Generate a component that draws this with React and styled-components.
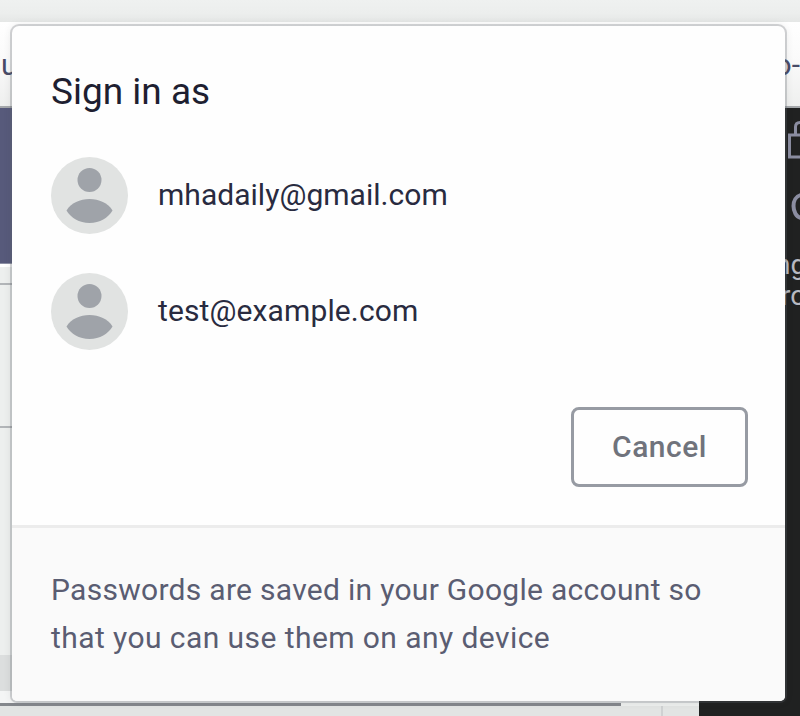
import React from "react";
import styled, { createGlobalStyle } from "styled-components";

const GlobalStyle = createGlobalStyle`
  *, *::before, *::after { box-sizing: border-box; }
  body { margin: 0; }
`;

const Screen = styled.div`
  position: relative;
  width: 800px;
  height: 716px;
  overflow: hidden;
  background: #eceeed;
  font-family: Roboto, "Liberation Sans", sans-serif;
`;

const Backdrop = styled.div`
  height: 100%;
  display: flex;
  flex-direction: column;
`;

const TabStrip = styled.div`
  height: 22px;
  flex: none;
  background: linear-gradient(#eff1f0, #eceeed 60%, #e5e7e6);
`;

const AddressBar = styled.div`
  height: 86px;
  flex: none;
  display: flex;
  justify-content: space-between;
  padding: 25px 0 0 1px;
  background: linear-gradient(#ffffff, #fbfbfb 40%, #eeefee);
  border-bottom: 2px solid #a5a8ab;
  color: #484b68;
  font-size: 30px;
  line-height: 36px;
  white-space: nowrap;
`;

const Panes = styled.div`
  flex: 1;
  display: flex;
  min-height: 0;
`;

const Page = styled.div`
  width: 699px;
  display: flex;
  flex-direction: column;
  background: #edefee;
`;

const Banner = styled.div`
  height: 156px;
  flex: none;
  background: #575a7b;
  border-bottom: 1px solid #8d90a5;
`;

const Block = styled.div`
  height: ${(p) => p.$height}px;
  flex: none;
  background: ${(p) => p.$fill || "#edefee"};
  border-bottom: ${(p) => (p.$ruled ? "2px solid #b2b5b8" : "0")};
`;

const BottomRule = styled.div`
  height: 3px;
  flex: none;
  width: 621px;
  background: #84878c;
`;

const BottomStrip = styled.div`
  flex: 1;
  display: flex;
  justify-content: flex-end;
  background: #e2e4e3;
`;

const BottomCell = styled.div`
  width: 38px;
  border-left: 2px solid #cfd1d2;
`;

const DevTools = styled.div`
  flex: 1;
  display: flex;
  flex-direction: column;
  align-items: flex-end;
  background: #202121;
  color: #b7b9c2;
  font-size: 28px;
  line-height: 31px;
`;

const DevIcons = styled.svg`
  display: block;
  width: 16px;
  height: 141px;
  flex: none;
`;

const DevLine = styled.div`
  width: ${(p) => p.$width}px;
  height: 31px;
  white-space: nowrap;
`;

const Dialog = styled.section`
  position: absolute;
  left: 12px;
  top: 26px;
  width: 773px;
  height: 675px;
  display: flex;
  flex-direction: column;
  overflow: hidden;
  background: #fefefe;
  border-radius: 7px 7px 5px 5px;
  box-shadow: 0 0 0 2px rgba(95, 100, 110, 0.26), 0 0 8px rgba(60, 64, 67, 0.14);
`;

const Body = styled.div`
  height: 499px;
  flex: none;
  display: flex;
  flex-direction: column;
  padding: 43px 37px 0 39px;
`;

const Title = styled.h1`
  margin: 0;
  height: 88px;
  color: #1e1f31;
  font-size: 37px;
  font-weight: 400;
  line-height: 46px;
`;

const Accounts = styled.ul`
  list-style: none;
  margin: 0;
  padding: 0;
  display: grid;
  gap: 39px;
`;

const Account = styled.li`
  display: flex;
  align-items: center;
  gap: 30px;
  height: 77px;
`;

const AvatarIcon = styled.svg`
  width: 77px;
  height: 77px;
  flex: none;
`;

const Email = styled.span`
  padding-bottom: 2px;
  color: #292b40;
  font-size: 30px;
  line-height: 36px;
  letter-spacing: ${(p) => p.$tracking}px;
`;

const CancelButton = styled.button`
  align-self: flex-end;
  width: 177px;
  height: 80px;
  margin-top: 57px;
  padding: 0 0 2px;
  background: #fefefe;
  border: 3px solid #979ba3;
  border-radius: 8px;
  color: #70737c;
  font-family: inherit;
  font-size: 30px;
  font-weight: 500;
  letter-spacing: 0.5px;
`;

const Footer = styled.footer`
  flex: 1;
  padding: 38px 30px 0 39px;
  background: #fafafa;
  border-top: 3px solid #ececec;
  color: #5a5d72;
  font-size: 30px;
  line-height: 48px;
`;

const FooterLine = styled.div`
  white-space: nowrap;
  letter-spacing: ${(p) => p.$tracking}px;
`;

function Avatar() {
  return (
    <AvatarIcon viewBox="0 0 77 77" aria-hidden="true">
      <circle cx="38.5" cy="38.5" r="38.5" fill="#e1e3e2" />
      <circle cx="38.5" cy="23" r="12" fill="#9fa3a9" />
      <path
        d="M15.5 53.5C20 46 29 42 38.500 42S57 46 61.500 53.500C57 61 49 66 38.500 66S20 61 15.500 53.500Z"
        fill="#9fa3a9"
      />
    </AvatarIcon>
  );
}

const accounts = [
  { email: "mhadaily@gmail.com", tracking: 0.03 },
  { email: "test@example.com", tracking: 0.12 },
];

export default function App() {
  return (
    <Screen>
      <GlobalStyle />
      <Backdrop>
        <TabStrip />
        <AddressBar>
          <span>u</span>
          <span>o-</span>
        </AddressBar>
        <Panes>
          <Page>
            <Banner />
            <Block $height={3} $fill="#ffffff" />
            <Block $height={18} $ruled />
            <Block $height={143} $ruled />
            <Block $height={227} />
            <Block $height={36} $fill="#dcdede" />
            <Block $height={12} $fill="#f4f5f5" />
            <BottomRule />
            <BottomStrip>
              <BottomCell />
            </BottomStrip>
          </Page>
          <DevTools>
            <DevIcons viewBox="0 0 16 141" fill="none" stroke="#8b8da1" strokeWidth="3">
              <path d="M16 27H5.500V49H16M11.500 27V19Q11.500 14.500 16 14.500" />
              <path d="M17 87C12 88 9.500 93 9.500 98S12 109 17 110" strokeWidth="4" />
            </DevIcons>
            <DevLine $width={25}>ng</DevLine>
            <DevLine $width={19}>ro</DevLine>
          </DevTools>
        </Panes>
      </Backdrop>
      <Dialog role="dialog" aria-label="Sign in as">
        <Body>
          <Title>Sign in as</Title>
          <Accounts>
            {accounts.map((a) => (
              <Account key={a.email}>
                <Avatar />
                <Email $tracking={a.tracking}>{a.email}</Email>
              </Account>
            ))}
          </Accounts>
          <CancelButton type="button">Cancel</CancelButton>
        </Body>
        <Footer>
          <FooterLine $tracking={0.29}>Passwords are saved in your Google account so</FooterLine>
          <FooterLine $tracking={0.43}>that you can use them on any device</FooterLine>
        </Footer>
      </Dialog>
    </Screen>
  );
}
